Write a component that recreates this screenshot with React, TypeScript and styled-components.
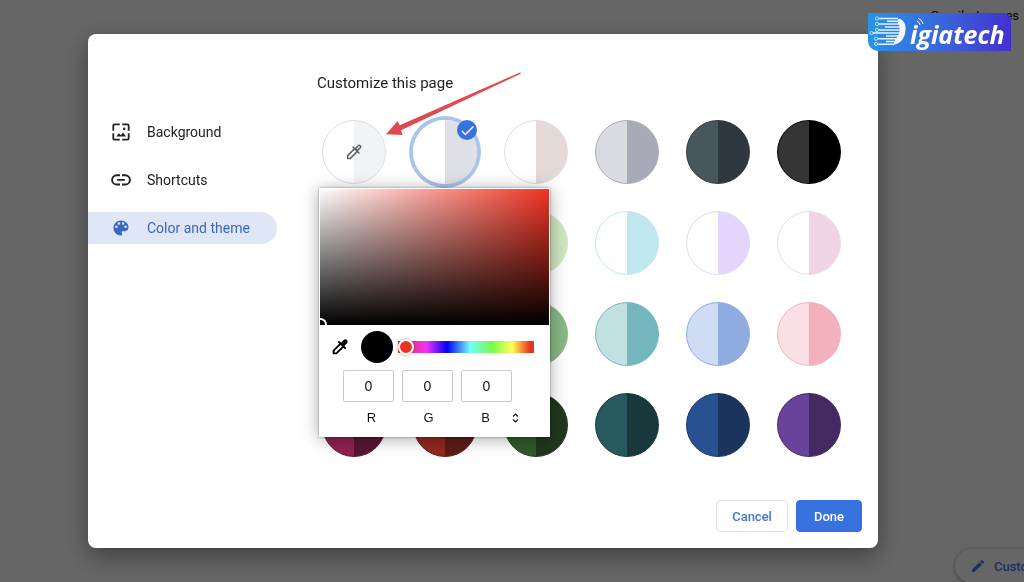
import React, { useState } from "react";
import styled, { createGlobalStyle, css } from "styled-components";
import { MdCheck, MdEdit } from "react-icons/md";

const GlobalStyle = createGlobalStyle`
  *, *::before, *::after { box-sizing: border-box; }
  body { margin: 0; background: #fff; font-family: Roboto, "Liberation Sans", sans-serif; font-size: 14px; color: #202124; }
  button, input { font: inherit; margin: 0; }
`;

const Page = styled.div`
  display: flex;
  flex-direction: column;
  justify-content: space-between;
  height: 100vh;
  overflow: hidden;
`;

const TopBar = styled.header`
  display: flex;
  justify-content: flex-end;
  gap: 12px;
  padding: 8px 5px 0 0;
`;

const TopLink = styled.a`
  font-size: 13px;
  line-height: 16px;
  color: #111;
  text-decoration: none;
`;

const PageFooter = styled.footer`
  display: flex;
  justify-content: flex-end;
  margin: 0 -96px -1px 0;
`;

const CustomizeButton = styled.button`
  display: flex;
  flex: none;
  align-items: center;
  gap: 8px;
  height: 34px;
  padding: 0 15px;
  border: 0;
  border-radius: 17px;
  background: #fff;
  box-shadow: 0 1px 4px rgba(0, 0, 0, 0.4);
  color: #3f7df0;
  font-size: 13px;
  font-weight: 500;
  white-space: nowrap;
`;

const Scrim = styled.div`
  position: fixed;
  inset: 0;
  display: flex;
  padding: 34px 146px 34px 88px;
  background: rgba(0, 0, 0, 0.6);
`;

const Dialog = styled.section`
  display: flex;
  flex: 1;
  flex-direction: column;
  border-radius: 8px;
  background: #fff;
  box-shadow: 0 8px 24px rgba(0, 0, 0, 0.4);
`;

const DialogBody = styled.div`
  display: flex;
  flex: 1;
`;

const Nav = styled.nav`
  display: flex;
  flex: none;
  flex-direction: column;
  gap: 16px;
  width: 229px;
  padding: 82px 40px 0 0;
`;

const NavItem = styled.button<{ $active?: boolean }>`
  display: flex;
  align-items: center;
  gap: 16px;
  height: 32px;
  padding: 0 0 0 23px;
  border: 0;
  border-radius: 0 16px 16px 0;
  background: ${(p) => (p.$active ? "#dfe6f5" : "transparent")};
  color: ${(p) => (p.$active ? "#3a68c0" : "#202124")};
  font-size: 14px;
  text-align: left;
  svg { flex: none; width: 20px; height: 20px; }
`;

const Content = styled.div`
  flex: 1;
  padding-top: 39px;
`;

const Title = styled.h1`
  margin: 0 0 27px;
  font-size: 15px;
  font-weight: 400;
  line-height: 20px;
`;

const ThemeArea = styled.div`
  position: relative;
  margin-left: 5px;
`;

const SwatchGrid = styled.div`
  display: grid;
  grid-template-columns: repeat(6, 64px);
  gap: 27px;
`;

const SwatchCell = styled.div`
  position: relative;
  display: flex;
`;

const Swatch = styled.input<{ $left: string; $right: string; $edge: string }>`
  appearance: none;
  width: 64px;
  height: 64px;
  border: 1px solid ${(p) => p.$edge};
  border-radius: 50%;
  background: linear-gradient(to right, ${(p) => p.$left} 50%, ${(p) => p.$right} 50%) border-box;
  ${(p) =>
    p.checked &&
    css`
      border-color: transparent;
      box-shadow: 0 0 0 4px #abc4ee;
    `}
`;

const PickerGlyph = styled.span`
  position: absolute;
  inset: 0;
  display: grid;
  place-items: center;
  color: #5f6368;
  pointer-events: none;
  svg { width: 20px; height: 20px; }
`;

const Badge = styled.span`
  position: absolute;
  top: 0;
  right: 0;
  display: grid;
  place-items: center;
  width: 20px;
  height: 20px;
  border-radius: 50%;
  background: #3871e0;
  color: #fff;
  svg { width: 17px; height: 17px; stroke: currentColor; }
`;

const Arrow = styled.svg`
  position: absolute;
  top: -48px;
  left: 63px;
  width: 136px;
  height: 64px;
`;

const Picker = styled.div`
  position: absolute;
  top: 68px;
  left: -3px;
  width: 231px;
  padding: 1px 1px 11px;
  background: #fff;
  box-shadow: 0 0 2px rgba(0, 0, 0, 0.4), 0 2px 16px rgba(0, 0, 0, 0.35);
`;

const ColorField = styled.div`
  position: relative;
  height: 136px;
  overflow: hidden;
  background: linear-gradient(to top, #000, transparent), linear-gradient(to right, #fff, #f03323);
`;

const FieldHandle = styled.span`
  position: absolute;
  bottom: -6px;
  left: -6px;
  width: 13px;
  height: 13px;
  border: 2px solid #fff;
  border-radius: 50%;
`;

const ToolRow = styled.div`
  display: flex;
  align-items: center;
  padding: 6px 15px 7px 10px;
`;

const DropperButton = styled.button`
  display: flex;
  padding: 0;
  border: 0;
  background: none;
  color: #000;
  svg { width: 20px; height: 20px; }
`;

const Preview = styled.span`
  width: 32px;
  height: 32px;
  margin: 0 5px 0 11px;
  border-radius: 50%;
  background: #000;
`;

const Hue = styled.input`
  appearance: none;
  flex: 1;
  min-width: 0;
  height: 16px;
  background: linear-gradient(to right, #ea3323, #ea33f7 21%, #0000f5 36%, #75fbfd 53%, #75fb4c 69%, #ffff54 84%, #ea3323 97%) center / 100% 12px no-repeat;
  border-radius: 2px;
  &::-webkit-slider-thumb {
    appearance: none;
    width: 16px;
    height: 16px;
    border: 2px solid #fff;
    border-radius: 50%;
    background: #ea3323;
    box-shadow: 0 0 3px rgba(0, 0, 0, 0.4);
  }
`;

const Channels = styled.div`
  display: flex;
  gap: 8px;
  padding-left: 23px;
  font-family: "Liberation Sans", Arial, sans-serif;
`;

const ChannelInput = styled.input`
  width: 51px;
  height: 32px;
  padding: 0;
  border: 1px solid #c9c9c9;
  border-radius: 2px;
  background: #fff;
  color: #111;
  font-size: 14px;
  text-align: center;
`;

const ChannelLabels = styled.div`
  display: flex;
  padding: 8px 0 0 23px;
  font-family: "Liberation Sans", Arial, sans-serif;
`;

const ChannelLabel = styled.label`
  width: 57px;
  color: #111;
  font-size: 13px;
  line-height: 16px;
  text-align: center;
`;

const FormatButton = styled.button`
  display: grid;
  place-items: center;
  width: 10px;
  height: 16px;
  margin-left: -4px;
  padding: 0;
  border: 0;
  background: none;
  svg { width: 7px; height: 10px; }
`;

const Actions = styled.div`
  display: flex;
  justify-content: flex-end;
  gap: 8px;
  padding: 0 16px 16px;
`;

const ActionButton = styled.button<{ $primary?: boolean }>`
  height: 32px;
  padding: 0 ${(p) => (p.$primary ? 17 : 15)}px;
  border: 1px solid ${(p) => (p.$primary ? "#3871e0" : "#dfe1e5")};
  border-radius: 4px;
  background: ${(p) => (p.$primary ? "#3871e0" : "#fff")};
  color: ${(p) => (p.$primary ? "#fff" : "#4478cf")};
  font-size: 13px;
  font-weight: 500;
`;

const Logo = styled.div`
  position: fixed;
  top: 13px;
  right: 13px;
  display: flex;
  width: 143px;
  height: 38px;
  padding-left: 13px;
  border-radius: 0 8px 0 10px;
  background: linear-gradient(to right, #2893e8, #3b62dc 55%, #4430cf);
  color: #fff;
  font-family: "Open Sans", sans-serif;
  font-style: italic;
  font-weight: 700;
  line-height: 38px;
`;

const LogoInitial = styled.span`
  width: 29px;
  font-size: 38px;
  line-height: 35px;
  color: transparent;
  background: linear-gradient(100deg, transparent 52%, #fff 52%);
  background-clip: text;
  -webkit-background-clip: text;
`;

const LogoRest = styled.span`
  padding-top: 2px;
  font-size: 25px;
`;

const LogoCircuit = styled.svg`
  position: absolute;
  inset: 0;
  width: 143px;
  height: 38px;
`;

const WallpaperIcon = () => (
  <svg viewBox="0 0 20 20" fill="none" stroke="currentColor" strokeWidth="1.8" aria-hidden="true">
    <path d="M2.3 8.8V3.8Q2.3 2.3 3.8 2.3H8.8M11.2 2.3H16.2Q17.7 2.3 17.7 3.8V8.8M17.7 11.2V16.2Q17.7 17.7 16.2 17.7H11.2M8.8 17.7H3.8Q2.3 17.7 2.3 16.2V11.2" />
    <path d="M5.2 14.6 8 11.2 9.8 13.2 12 10.4 15 14.6Z" fill="currentColor" stroke="none" />
    <circle cx="13.2" cy="6.8" r="1.3" fill="currentColor" stroke="none" />
  </svg>
);

const LinkIcon = () => (
  <svg viewBox="0 0 20 20" fill="none" stroke="currentColor" strokeWidth="1.9" aria-hidden="true">
    <path d="M9 5.3H5.7a4.6 4.6 0 0 0 0 9.2H9M11 5.3h3.3a4.6 4.6 0 0 1 0 9.2H11M6.2 9.9h7.6" />
  </svg>
);

const PaletteIcon = () => (
  <svg viewBox="0 0 24 24" fill="currentColor" aria-hidden="true">
    <path d="M12 3c-4.97 0-9 4.03-9 9s4.03 9 9 9c.83 0 1.5-.67 1.5-1.5 0-.39-.15-.74-.39-1.01-.23-.26-.38-.61-.38-.99 0-.83.67-1.5 1.5-1.5H16c2.76 0 5-2.24 5-5 0-4.42-4.03-8-9-8zm-5.5 9c-.83 0-1.5-.67-1.5-1.5S5.67 9 6.5 9 8 9.67 8 10.5 7.33 12 6.5 12zm3-4C8.67 8 8 7.33 8 6.5S8.67 5 9.5 5s1.5.67 1.5 1.5S10.33 8 9.5 8zm5 0c-.83 0-1.5-.67-1.5-1.5S13.67 5 14.5 5s1.5.67 1.5 1.5S15.33 8 14.5 8zm3 4c-.83 0-1.5-.67-1.5-1.5S16.67 9 17.5 9s1.5.67 1.5 1.5-.67 1.5-1.5 1.5z" />
  </svg>
);

const DropperIcon = ({ filled }: { filled?: boolean }) => (
  <svg viewBox="0 0 20 20" fill="none" stroke="currentColor" strokeWidth={filled ? 1.9 : 1.5} strokeLinejoin="round" aria-hidden="true">
    <path d="M10.6 6.6 3.6 13.6V16.4H6.4L13.4 9.4" />
    <path d="M9 5 15 11" strokeLinecap="round" />
    <path d="M11.4 6.6 14.3 3.7Q15.4 2.8 16.3 3.7Q17.2 4.6 16.3 5.7L13.4 8.6Z" fill={filled ? "currentColor" : "none"} />
  </svg>
);

const themes: { name: string; left: string; right: string; edge?: string }[] = [
  { name: "Custom color", left: "#fff", right: "#f1f3f5", edge: "#dcdee0" },
  { name: "Default color", left: "#fff", right: "#dee0e6" },
  { name: "Warm grey", left: "#fff", right: "#e3dad8", edge: "#dedede" },
  { name: "Cool grey", left: "#d9dbe1", right: "#a8abb7" },
  { name: "Midnight blue", left: "#48565e", right: "#2f3840" },
  { name: "Black", left: "#353535", right: "#000" },
  { name: "Beige and white", left: "#fff", right: "#f3e0c5" },
  { name: "Yellow and white", left: "#fff", right: "#f8e9a8" },
  { name: "Green and white", left: "#fff", right: "#cde6c1" },
  { name: "Light teal and white", left: "#fff", right: "#c0e7f0" },
  { name: "Light purple and white", left: "#fff", right: "#e5d5fc", edge: "#dfdde8" },
  { name: "Pink and white", left: "#fff", right: "#f0d4e5", edge: "#e6dfe3" },
  { name: "Beige", left: "#f5e3d0", right: "#e5b98f" },
  { name: "Orange", left: "#fbe0b8", right: "#f4b75e" },
  { name: "Light green", left: "#c9e3c6", right: "#86b884" },
  { name: "Light teal", left: "#c1e0e2", right: "#74b6be" },
  { name: "Light blue", left: "#cfdcf5", right: "#8eabe2" },
  { name: "Pink", left: "#fae0e4", right: "#f3b1bd" },
  { name: "Dark pink and red", left: "#8e2350", right: "#571633" },
  { name: "Dark red and orange", left: "#92291f", right: "#5c1c18" },
  { name: "Dark green", left: "#2f5a2b", right: "#20381c" },
  { name: "Dark teal", left: "#275a5f", right: "#19383b" },
  { name: "Dark blue", left: "#275191", right: "#1b345d" },
  { name: "Dark purple", left: "#69439a", right: "#432a62" },
];

const channels = ["R", "G", "B"];

export default function App() {
  const [selected, setSelected] = useState(1);
  return (
    <>
      <GlobalStyle />
      <Page>
        <TopBar>
          <TopLink href="#gmail">Gmail</TopLink>
          <TopLink href="#images">Images</TopLink>
        </TopBar>
        <PageFooter>
          <CustomizeButton>
            <MdEdit size={16} />
            Customize Chrome
          </CustomizeButton>
        </PageFooter>
      </Page>
      <Scrim>
        <Dialog role="dialog" aria-labelledby="dialog-title">
          <DialogBody>
            <Nav>
              <NavItem><WallpaperIcon />Background</NavItem>
              <NavItem><LinkIcon />Shortcuts</NavItem>
              <NavItem $active><PaletteIcon />Color and theme</NavItem>
            </Nav>
            <Content>
              <Title id="dialog-title">Customize this page</Title>
              <ThemeArea>
                <SwatchGrid role="radiogroup" aria-labelledby="dialog-title">
                  {themes.map((t, i) => (
                    <SwatchCell key={t.name}>
                      <Swatch
                        type="radio"
                        name="theme"
                        aria-label={t.name}
                        checked={i === selected}
                        onChange={() => setSelected(i)}
                        $left={t.left}
                        $right={t.right}
                        $edge={t.edge ?? t.right}
                      />
                      {i === 0 && <PickerGlyph><DropperIcon /></PickerGlyph>}
                      {i === selected && <Badge><MdCheck /></Badge>}
                    </SwatchCell>
                  ))}
                </SwatchGrid>
                <Picker>
                  <ColorField><FieldHandle /></ColorField>
                  <ToolRow>
                    <DropperButton aria-label="Pick a color from the screen"><DropperIcon filled /></DropperButton>
                    <Preview />
                    <Hue type="range" aria-label="Hue" min={0} max={360} defaultValue={0} />
                  </ToolRow>
                  <Channels>
                    {channels.map((c) => (
                      <ChannelInput key={c} id={`channel-${c}`} defaultValue="0" />
                    ))}
                  </Channels>
                  <ChannelLabels>
                    {channels.map((c) => (
                      <ChannelLabel key={c} htmlFor={`channel-${c}`}>{c}</ChannelLabel>
                    ))}
                    <FormatButton aria-label="Change color format">
                      <svg viewBox="0 0 7 10" fill="none" stroke="#111" strokeWidth="1.1">
                        <path d="M1 3.5 3.5 1 6 3.5M1 6.5 3.5 9 6 6.5" />
                      </svg>
                    </FormatButton>
                  </ChannelLabels>
                </Picker>
                <Arrow viewBox="225 36 408 192" aria-hidden="true">
                  <path d="M228 223 263 183 269 196 631 37 632 41 273 211 278 225Z" fill="#df4a50" />
                </Arrow>
              </ThemeArea>
            </Content>
          </DialogBody>
          <Actions>
            <ActionButton>Cancel</ActionButton>
            <ActionButton $primary>Done</ActionButton>
          </Actions>
        </Dialog>
      </Scrim>
      <Logo>
        <LogoInitial>D</LogoInitial>
        <LogoRest>igiatech</LogoRest>
        <LogoCircuit viewBox="0 0 143 38" fill="none" aria-hidden="true">
          <g stroke="#e6f4fd" strokeWidth="1.5">
            <path d="M11 5.5H30M19 8.3H33M11 11H34M17 14H35M11 17H35M5 20H34M18 23H34M10 25.7H33M18 28.5H31M10 31.2H26" />
          </g>
          <g stroke="#b5ecf2" strokeWidth="1">
            <circle cx="9" cy="5.5" r="1.6" /><circle cx="9" cy="11" r="1.6" />
            <circle cx="9" cy="17" r="1.6" /><circle cx="3.5" cy="20" r="1.6" />
            <circle cx="8" cy="25.7" r="1.6" /><circle cx="8" cy="31" r="1.6" />
          </g>
          <path d="M49 8a5 5 0 0 1 3 4M50 5a8 8 0 0 1 5 6" stroke="#fff" />
        </LogoCircuit>
      </Logo>
    </>
  );
}
